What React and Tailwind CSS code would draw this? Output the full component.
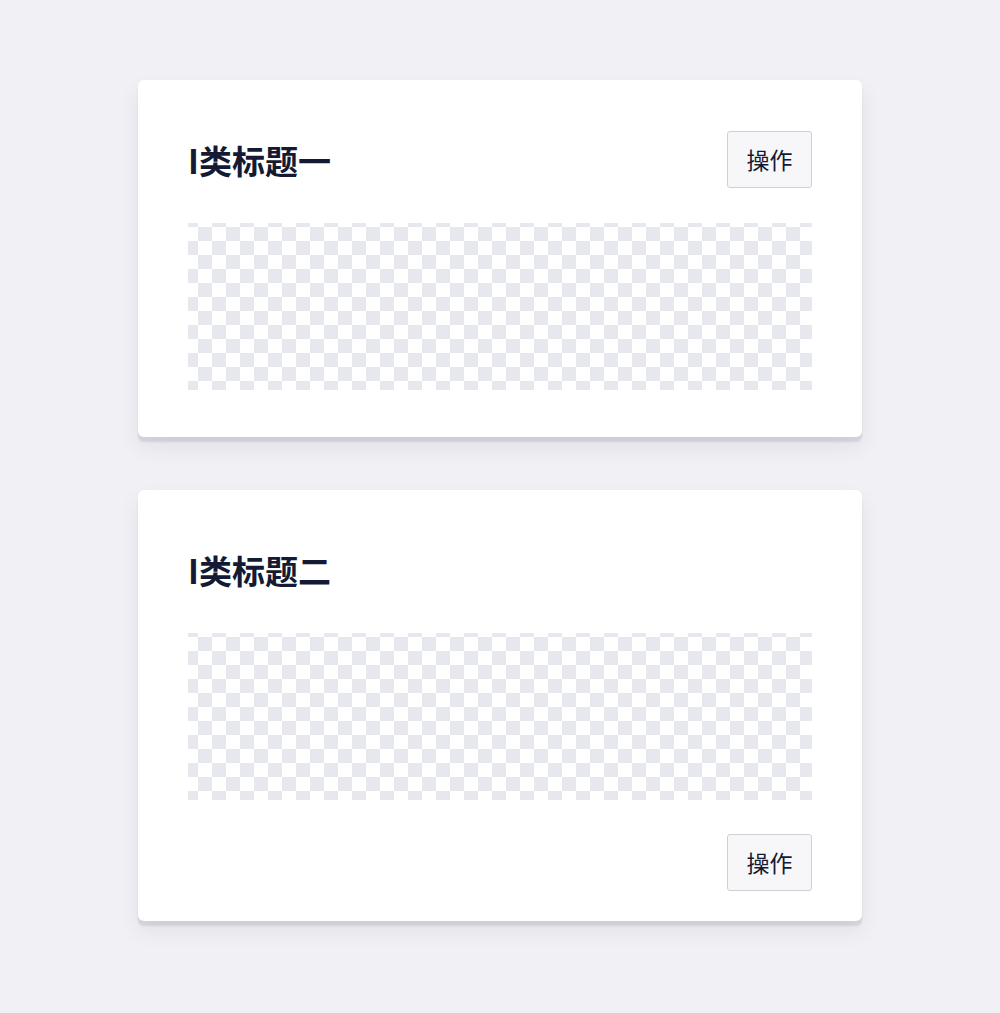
const FONT = { fontFamily: '"Noto Sans CJK SC", "Noto Sans", sans-serif' }

function Checker() {
  return (
    <div
      className="h-[167px] w-full bg-white bg-[length:28px_28px] bg-[position:10px_-10px]"
      style={{ backgroundImage: 'repeating-conic-gradient(#e7e7ee 0 25%, #ffffff 0 50%)' }}
    />
  )
}

function ActionButton() {
  return (
    <button className="h-[57px] w-[85px] rounded-[3px] border border-[#cfcfd6] bg-[#f7f7f9] text-[23px] leading-none text-[#141a33]">
      操作
    </button>
  )
}

function Card({ title, topAction, bottomAction }) {
  return (
    <div className="w-[724px] rounded-md bg-white px-[50px] pt-[51px] shadow-[0_5px_2px_rgba(30,30,60,0.1),0_10px_22px_rgba(30,30,60,0.07)]"
      style={{ paddingBottom: bottomAction ? 30 : 47 }}>
      <div className="flex h-[57px] items-center justify-between">
        <h2 className="pt-[2px] text-[33px] font-semibold leading-none text-[#141a33]">{title}</h2>
        {topAction && <ActionButton />}
      </div>
      <div className="mt-[35px]">
        <Checker />
      </div>
      {bottomAction && (
        <div className="mt-[34px] flex justify-end">
          <ActionButton />
        </div>
      )}
    </div>
  )
}

export default function App() {
  return (
    <div className="min-h-[1013px] w-full bg-[#f1f0f5]" style={FONT}>
      <div className="flex flex-col items-center gap-[53px] pt-[80px]">
        <Card title="I类标题一" topAction />
        <Card title="I类标题二" bottomAction />
      </div>
    </div>
  )
}
